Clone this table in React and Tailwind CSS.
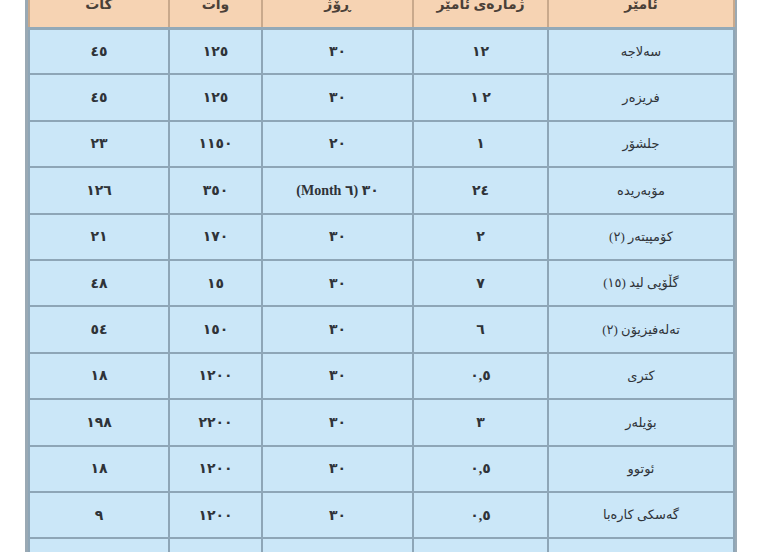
const rows = [
  ['سەلاجە', '١٢', '٣٠', '١٢٥', '٤٥'],
  ['فریزەر', '٢ ١', '٣٠', '١٢٥', '٤٥'],
  ['جلشۆر', '١', '٢٠', '١١٥٠', '٢٣'],
  ['مۆبەریدە', '٢٤', 'month', '٣٥٠', '١٢٦'],
  ['کۆمپیتەر  (٢)', '٢', '٣٠', '١٧٠', '٢١'],
  ['گڵۆپی لید  (١٥)', '٧', '٣٠', '١٥', '٤٨'],
  ['تەلەفیزیۆن  (٢)', '٦', '٣٠', '١٥٠', '٥٤'],
  ['کتری', '٠,٥', '٣٠', '١٢٠٠', '١٨'],
  ['بۆیلەر', '٣', '٣٠', '٢٢٠٠', '١٩٨'],
  ['ئوتوو', '٠,٥', '٣٠', '١٢٠٠', '١٨'],
  ['گەسکی کارەبا', '٠,٥', '٣٠', '١٢٠٠', '٩'],
  ['', '', '', '', ''],
]

const headers = ['ئامێر', 'ژمارەی ئامێر', 'ڕۆژ', 'وات', 'کات']

function Cell({ value }) {
  // the one mixed cell: "٣٠" then "(Month ٦)" to its left
  if (value === 'month') {
    return (
      <>
        ٣٠ <bdi dir="ltr">(Month ٦)</bdi>
      </>
    )
  }
  return value
}

export default function App() {
  return (
    <div className="w-[770px] h-[552px] overflow-hidden bg-white">
      <div className="ml-[25px] -mt-[18px] w-[712px] border-l-[3px] border-r-[2px] border-[#9aa9b4]">
        <table
          dir="rtl"
          className="w-full table-fixed border-collapse text-[#2f3338]"
          style={{ fontFamily: '"Liberation Serif", "DejaVu Sans", serif' }}
        >
          <colgroup>
            <col className="w-[186px]" />
            <col className="w-[135px]" />
            <col className="w-[151px]" />
            <col className="w-[93px]" />
            <col />
          </colgroup>
          <thead>
            <tr className="bg-[#f6d3b3] h-[46px]">
              {headers.map((h, i) => (
                <th
                  key={i}
                  className="border-x-2 border-[#c9a98c] border-b-[3px] border-b-[#93a9b8] text-center align-middle text-[14px] font-bold text-[#4a4038]"
                >
                  {h}
                </th>
              ))}
            </tr>
          </thead>
          <tbody>
            {rows.map((r, ri) => (
              <tr key={ri} className="bg-[#cbe7f8] h-[46.4px]">
                {r.map((c, ci) => (
                  <td
                    key={ci}
                    className={`border-2 border-[#8ea6b7] text-center align-middle ${
                      ci === 0 ? 'text-[13px] font-normal' : 'text-[14px] font-bold'
                    }`}
                  >
                    <Cell value={c} />
                  </td>
                ))}
              </tr>
            ))}
          </tbody>
        </table>
      </div>
    </div>
  )
}
